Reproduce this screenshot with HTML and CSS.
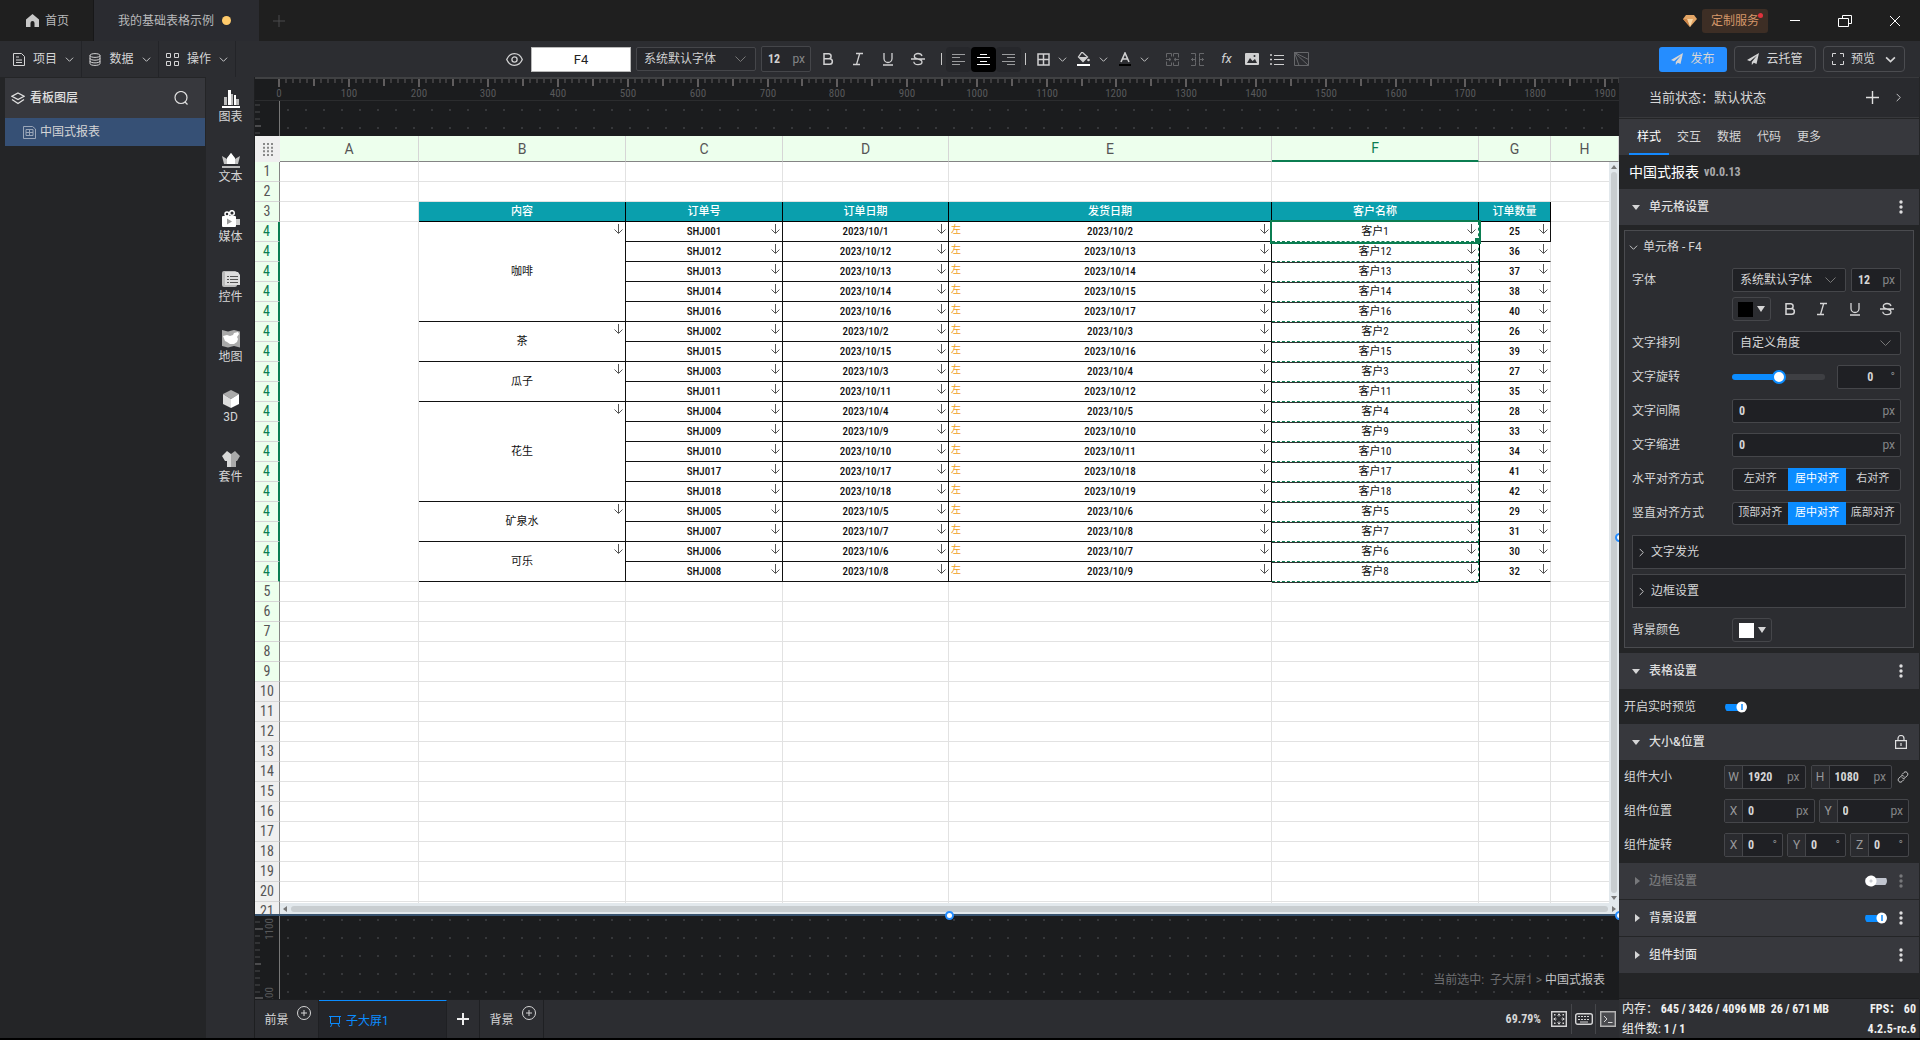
FILE: index.html
```html
<!DOCTYPE html>
<html lang="zh-CN">
<head>
<meta charset="utf-8">
<title>我的基础表格示例</title>
<link rel="stylesheet" href="styles.css">
<script src="app.js" defer></script>
</head>
<body>
<svg class="sprite" aria-hidden="true">
  <symbol id="chev" viewBox="0 0 10 10"><path d="M1 3l4 4 4-4" fill="none" stroke="currentColor"/></symbol>
  <symbol id="chev-r" viewBox="0 0 10 10"><path d="M3 1l4 4-4 4" fill="none" stroke="currentColor"/></symbol>
  <symbol id="bold" viewBox="0 0 14 14"><path d="M3 1.7h5a2.6 2.6 0 010 5.1H3zm0 5.1h5.600a2.700 2.700 0 010 5.500H3z" fill="none" stroke="currentColor" stroke-width="1.500"/></symbol>
  <symbol id="italic" viewBox="0 0 14 14"><path d="M5 1.500h7M2 12.500h7M8.700 1.500l-3.200 11" fill="none" stroke="currentColor" stroke-width="1.300"/></symbol>
  <symbol id="under" viewBox="0 0 14 14"><path d="M3 1v5.500a4 4 0 008 0V1M2 13h10" fill="none" stroke="currentColor" stroke-width="1.300"/></symbol>
  <symbol id="strike" viewBox="0 0 14 14"><path d="M11 4C10.500 2 9 1.500 7 1.500 5 1.500 3.300 2.500 3.300 4.200 3.300 6 5 6.600 7 7c2.500.5 4 1.200 4 3 0 1.700-1.700 2.600-4 2.600S3 11.600 2.800 9.700M0 7h14" fill="none" stroke="currentColor" stroke-width="1.300"/></symbol>
  <symbol id="plane" viewBox="0 0 12 12"><path d="M12 0L0 7l3 1.200L10 2.500 4.800 9v3l2-2.300L9.500 11z" fill="currentColor"/></symbol>
  <symbol id="dots" viewBox="0 0 4 14"><g fill="currentColor"><circle cx="2" cy="2" r="1.700"/><circle cx="2" cy="7" r="1.700"/><circle cx="2" cy="12" r="1.700"/></g></symbol>
  <symbol id="plus-o" viewBox="0 0 14 14"><path d="M7 4v6M4 7h6M13.500 7a6.500 6.500 0 11-13 0 6.500 6.500 0 0113 0z" fill="none" stroke="currentColor"/></symbol>
</svg>

<header class="titlebar">
  <nav class="wintabs">
    <a class="wintab home" href="#"><svg width="13" height="13" viewBox="0 0 13 13"><path d="M6.500 0L0 5.500V13h4.500V9a2 2 0 014 0v4H13V5.500z" fill="#c8c8c8"/></svg>首页</a>
    <a class="wintab current" href="#">我的基础表格示例<i class="unsaved"></i></a>
    <button class="newtab" aria-label="新建"><svg width="12" height="12" viewBox="0 0 12 12"><path d="M6 0v12M0 6h12" stroke="#4a4a4c"/></svg></button>
  </nav>
  <div class="winctl">
    <svg width="14" height="12" viewBox="0 0 14 12"><path d="M3 0h8l3 4-7 8-7-8z" fill="#e3a565"/><path d="M4 4h6l-3 8z" fill="#f8d6a4"/><path d="M0 4h4L7 12z" fill="#cd8547"/></svg>
    <a class="custom" href="#">定制服务<i></i></a>
    <button aria-label="最小化"><svg width="10" height="10" viewBox="0 0 10 10"><path d="M0 4.500h10" stroke="#fff"/></svg></button>
    <button aria-label="还原"><svg width="14" height="12" viewBox="0 0 14 12"><path d="M.5 3.500h10v8h-10zM4.500 3.500v-3h9v8h-3" fill="none" stroke="#fff"/></svg></button>
    <button aria-label="关闭"><svg width="12" height="12" viewBox="0 0 12 12"><path d="M1 1l10 10M11 1L1 11" stroke="#fff"/></svg></button>
  </div>
</header>

<div class="toolbar">
  <div class="menus">
    <button class="menu"><svg width="12" height="13" viewBox="0 0 12 13"><path d="M.5.5h8l3 3v9H.5zM3 4h3M3 7h6M3 9.500h6" fill="none" stroke="currentColor"/></svg>项目<svg class="c"><use href="#chev"/></svg></button>
    <button class="menu"><svg width="12" height="13" viewBox="0 0 12 13"><path d="M1 2.500C1 0 11 0 11 2.500v8c0 2.500-10 2.500-10 0zM1 2.500c0 2.500 10 2.500 10 0M1 5.300c0 2.500 10 2.500 10 0M1 8c0 2.500 10 2.500 10 0" fill="none" stroke="currentColor"/></svg>数据<svg class="c"><use href="#chev"/></svg></button>
    <button class="menu"><svg width="13" height="13" viewBox="0 0 13 13"><path d="M.5.5h4v4h-4zM8.500.5h4v4h-4zM.5 8.500h4v4h-4zM8.500 8.500h4v4h-4z" fill="none" stroke="currentColor"/></svg>操作<svg class="c"><use href="#chev"/></svg></button>
  </div>
  <div class="tools">
    <button class="eye" aria-label="显示"><svg width="17" height="13" viewBox="0 0 17 13"><path d="M.7 6.500C4-1.300 13-1.300 16.300 6.500 13 14.300 4 14.300.7 6.500z" fill="none" stroke="currentColor" stroke-width="1.300"/><circle cx="8.500" cy="6.500" r="2.600" fill="none" stroke="currentColor" stroke-width="1.300"/></svg></button>
    <input class="cellref" aria-label="单元格" value="F4">
    <select class="sel toolfont" aria-label="字体"><option>系统默认字体</option></select>
    <label class="field toolsize"><input value="12" aria-label="字号"><span>px</span></label>
    <button class="w30" aria-label="加粗"><svg class="s"><use href="#bold"/></svg></button>
    <button class="w30" aria-label="斜体"><svg class="s"><use href="#italic"/></svg></button>
    <button class="w30" aria-label="下划线"><svg class="s"><use href="#under"/></svg></button>
    <button class="w30" aria-label="删除线"><svg class="s"><use href="#strike"/></svg></button>
    <i class="vr"></i>
    <button class="al" aria-label="左对齐"><svg width="13" height="13" viewBox="0 0 13 13"><path d="M0 1.500h13M0 4.500h8M0 8.500h13M0 11.500h8" stroke="currentColor"/></svg></button>
    <button class="al on" aria-label="居中"><svg width="13" height="13" viewBox="0 0 13 13"><path d="M0 4.500h13M3 1.500h7M0 11.500h13M3 8.500h7" stroke="currentColor"/></svg></button>
    <button class="al" aria-label="右对齐"><svg width="13" height="13" viewBox="0 0 13 13"><path d="M0 1.500h13M5 4.500h8M0 8.500h13M5 11.500h8" stroke="currentColor"/></svg></button>
    <i class="vr tail"></i>
    <button class="w24" aria-label="边框"><svg width="13" height="13" viewBox="0 0 13 13"><path d="M1 1h11v11H1zM6.500 1v11M1 6.500h11" fill="none" stroke="currentColor" stroke-width="1.500"/></svg></button>
    <button class="cv" aria-label="边框选项"><svg class="c"><use href="#chev"/></svg></button>
    <button class="w24" aria-label="填充"><svg width="14" height="14" viewBox="0 0 14 14"><path d="M5 0l5.500 5L6 9.500 1.500 5z" fill="none" stroke="currentColor" stroke-width="1.300"/><path d="M2 5h8.500L6 9.500z" fill="currentColor"/><circle cx="11.500" cy="8" r="1.300" fill="currentColor"/><path d="M0 13h13" stroke="#fff" stroke-width="2"/></svg></button>
    <button class="cv" aria-label="填充选项"><svg class="c"><use href="#chev"/></svg></button>
    <button class="w24" aria-label="文字颜色"><svg width="12" height="14" viewBox="0 0 12 14"><path d="M2 10L6 1l4 9M3.500 7h5" fill="none" stroke="currentColor" stroke-width="1.600"/><path d="M0 13h12" stroke="#000" stroke-width="2"/></svg></button>
    <button class="cv" aria-label="颜色选项"><svg class="c"><use href="#chev"/></svg></button>
    <button class="w25 dim" aria-label="合并"><svg width="13" height="13" viewBox="0 0 13 13"><path d="M5.500.5h-5v4M.5 8.500v4h5M7.500.5h5v4M12.500 8.500v4h-5M5.500.5v3M5.500 9.500v3M7.500.5v3M7.500 9.500v3M0 6.500h4.500M13 6.500H8.500M3 5l2 1.500L3 8M10 5L8 6.500 10 8" fill="none" stroke="currentColor"/></svg></button>
    <button class="w25 dim" aria-label="拆分"><svg width="13" height="13" viewBox="0 0 13 13"><path d="M0 .5h4.500v3M0 12.500h4.500v-3M13 .5H8.500v3M13 12.500H8.500v-3M0 6.500h5M13 6.500H8M2 5L.5 6.500 2 8M11 5l1.500 1.500L11 8M4.500 3.500v6M8.500 3.500v6" fill="none" stroke="currentColor"/></svg></button>
    <button class="w25 fx">fx</button>
    <button class="w25" aria-label="图片"><svg width="14" height="12" viewBox="0 0 14 12"><rect width="14" height="12" rx="1" fill="currentColor"/><path d="M2 10l3-5 2.500 3L10 6l2 4z" fill="#2c2d31"/><circle cx="9.500" cy="3" r="1" fill="#2c2d31"/></svg></button>
    <button class="w25" aria-label="列表"><svg width="14" height="11" viewBox="0 0 14 11"><path d="M0 1h2M0 5.500h2M0 10h2" stroke="currentColor" stroke-width="1.500"/><path d="M4 1.500h10M4 5.500h10M4 10.500h10" stroke="currentColor"/></svg></button>
    <button class="w25 dim" aria-label="斜线表头"><svg width="15" height="14" viewBox="0 0 15 14"><path d="M.5.500h14v13H.5zM.5.500L5 13.500M.5.500l14 7M.5.500l14 13" fill="none" stroke="currentColor"/></svg></button>
  </div>
  <div class="actions">
    <button class="primary"><svg width="12" height="12"><use href="#plane"/></svg>发布</button>
    <button class="ghost"><svg width="12" height="12"><use href="#plane"/></svg>云托管</button>
    <button class="ghost"><svg width="12" height="12" viewBox="0 0 12 12"><path d="M4 .5H.5V4M8 .5h3.500V4M4 11.500H.5V8M8 11.500h3.500V8" fill="none" stroke="currentColor"/></svg>预览<svg class="big"><use href="#chev"/></svg></button>
  </div>
</div>

<main class="work">
  <aside class="layers">
    <h2><svg width="14" height="13" viewBox="0 0 14 13"><path d="M7 1l6 3.300-6 3.300-6-3.300zM1 7.500L7 11.500l6-4" fill="none" stroke="currentColor" stroke-width="1.300"/></svg>看板图层
      <button aria-label="搜索"><svg width="14" height="14" viewBox="0 0 14 14"><circle cx="7" cy="6.500" r="6" fill="none" stroke="currentColor" stroke-width="1.200"/><path d="M11 11l2.500 2.500" stroke="currentColor" stroke-width="1.200"/></svg></button></h2>
    <a class="layer" href="#"><svg width="13" height="13" viewBox="0 0 13 13"><path d="M.5.500h9l3 2.500v9.500H.5z" fill="none" stroke="currentColor"/><path d="M3 3.500h7v6H3zM3 6.500h7M6.500 3.500v6" fill="none" stroke="currentColor"/></svg>中国式报表</a>
  </aside>
  <nav class="palette">
    <a href="#"><svg viewBox="0 0 18 18"><path d="M0 17h18" stroke="#fff" stroke-width="2"/><path d="M6 0h3v15H6zM12 5h2v10h-2z" fill="#fff"/><path d="M2 7h3v8H2zM9 4h2v11H9zM14 9h3v6h-3z" fill="#bbb"/></svg>图表</a>
    <a href="#"><svg viewBox="0 0 18 18"><path d="M0 6l5 3 4-6 4 6 5-3-2 8H2z" fill="#c4c4c4"/><path d="M9 3l4 5v6H5V8z" fill="#fff"/><path d="M0 17h18" stroke="#bbb" stroke-width="2"/></svg>文本</a>
    <a href="#"><svg viewBox="0 0 18 18"><circle cx="5" cy="4" r="2" fill="none" stroke="#fff" stroke-width="1.500"/><circle cx="10" cy="3" r="2.300" fill="none" stroke="#fff" stroke-width="1.500"/><rect y="6" width="14" height="11" rx="1" fill="#fff"/><path d="M14 9h4v6h-4z" fill="#ccc"/><path d="M5 8.500l5 3-5 3z" fill="#999"/></svg>媒体</a>
    <a href="#"><svg viewBox="0 0 18 18"><rect x="0" y="1" width="15" height="16" rx="2" fill="#bbb"/><path d="M3 2h13l2 3v10H3z" fill="#ddd"/><path d="M5 6.500h2M8 6.500h8M5 9.500h2M8 9.500h8M5 12.500h2M8 12.500h8" stroke="#555"/></svg>控件</a>
    <a href="#"><svg viewBox="0 0 18 18"><path d="M0 0l6 1.500L12 0l6 1.500v16L12 16l-6 1.500L0 16z" fill="#a9a9a9"/><path d="M1 6l4-1 3 1 3-1 1-2 4-1 1 2-2 3 1 2-1 3-3 2-4 0-3-2-2-1z" fill="#fff"/></svg>地图</a>
    <a href="#"><svg viewBox="0 0 18 18"><path d="M9 0l8 4-8 5-8-5z" fill="#aaa"/><path d="M1 4l8 5v9l-8-4z" fill="#ddd"/><path d="M17 4L9 9v9l8-4z" fill="#fff"/></svg>3D</a>
    <a href="#"><svg viewBox="0 0 18 18"><path d="M5 1l4 3v13H5V11H3L0 6z" fill="#d8d8d8"/><path d="M13 1L9 4v13h5V11h1l3-5z" fill="#aaa"/></svg>套件</a>
  </nav>

  <section class="stage">
    <div class="canvas">
      <svg class="vruler" id="vruler" aria-hidden="true"></svg>
      <svg class="hruler" id="hruler" aria-hidden="true"></svg>
      <div class="sheet">
        <div class="clip">
          <table class="grid">
            <colgroup><col class="c0"><col class="ca"><col class="cb"><col class="cc"><col class="cd"><col class="ce"><col class="cb"><col class="cg"><col></colgroup>
            <thead><tr><th class="corner"><svg width="10" height="13" viewBox="0 0 10 13"><path d="M1 0v13M5 0v13M9 0v13" stroke="#888" stroke-width="2" stroke-dasharray="2 1.660"/></svg></th><th>A</th><th>B</th><th>C</th><th>D</th><th>E</th><th class="active">F</th><th>G</th><th>H</th></tr></thead>
            <tbody id="rows"></tbody>
          </table>
        </div>
        <div class="vscroll"><i class="up"></i><b></b><i class="down"></i></div>
        <div class="hscroll"><i class="left"></i><b></b><i class="right"></i></div>
        <i class="handle hs"></i><i class="handle he"></i><i class="handle hse"></i>
      </div>
      <p class="crumb">当前选中:&nbsp; 子大屏1 &gt; <b>中国式报表</b></p>
    </div>
    <footer class="screens">
      <button class="scr">前景<svg width="14" height="14"><use href="#plus-o"/></svg></button>
      <button class="scr now"><svg width="12" height="11" viewBox="0 0 12 11"><path d="M0 .5h12M1.500.500v7h9v-7M3 8l-1.500 3M9 8l1.500 3" fill="none" stroke="currentColor"/></svg>子大屏1</button>
      <button class="scr add" aria-label="添加"><svg width="12" height="12" viewBox="0 0 12 12"><path d="M6 0v12M0 6h12" stroke="#eee" stroke-width="2"/></svg></button>
      <button class="scr">背景<svg width="14" height="14"><use href="#plus-o"/></svg></button>
      <div class="zoom"><span>69.79%</span>
        <button aria-label="适应"><svg width="16" height="16" viewBox="0 0 16 16"><path d="M.7.700h14.600v14.600H.7z" fill="none" stroke="currentColor" stroke-width="1.400"/><path d="M8 2.500v3M8 10.500v3M2.500 8h3M10.500 8h3M6.500 4.500L8 3l1.500 1.500M6.500 11.500L8 13l1.500-1.500M4.500 6.500L3 8l1.500 1.500M11.500 6.500L13 8l-1.500 1.500" fill="none" stroke="currentColor"/><path d="M3 3h1.500v1.500H3zM11.500 3H13v1.500h-1.500zM3 11.500h1.500V13H3zM11.500 11.500H13V13h-1.500z" fill="currentColor"/></svg></button>
        <button aria-label="键盘"><svg width="18" height="12" viewBox="0 0 18 12"><rect x=".7" y=".7" width="16.600" height="10.600" rx="2" fill="none" stroke="currentColor" stroke-width="1.400"/><path d="M3 3.500h12M3 6.500h12" stroke="currentColor" stroke-dasharray="2 1"/><path d="M5 9h8" stroke="currentColor"/></svg></button>
        <button aria-label="终端"><svg width="16" height="16" viewBox="0 0 16 16"><path d="M.7.700h14.600v14.600H.7z" fill="#4a4b4f" stroke="#b4b4b4" stroke-width="1.400"/><path d="M4 5l3 3-3 3M8 11.500h4.500" fill="none" stroke="currentColor"/></svg></button>
      </div>
    </footer>
  </section>

  <aside class="props">
    <div class="state"><span>当前状态：默认状态</span><button aria-label="添加状态"><svg width="13" height="13" viewBox="0 0 13 13"><path d="M6.500 0v13M0 6.500h13" stroke="#e0e0e0" stroke-width="1.400"/></svg></button><svg class="c"><use href="#chev-r"/></svg></div>
    <nav class="ptabs"><a class="on" href="#">样式</a><a href="#">交互</a><a href="#">数据</a><a href="#">代码</a><a href="#">更多</a></nav>
    <h1>中国式报表<small>v0.0.13</small></h1>

    <h3 class="open"><i></i>单元格设置<svg class="d"><use href="#dots"/></svg></h3>
    <div class="card">
      <div class="cardhead"><svg class="c"><use href="#chev"/></svg>单元格 - F4</div>
      <div class="row"><label for="ff">字体</label><div class="ctl"><select id="ff" class="sel fam"><option>系统默认字体</option></select><label class="field size"><input value="12" aria-label="字号"><span>px</span></label></div></div>
      <div class="row short"><span></span><div class="ctl"><button class="color" aria-label="文字颜色"><i class="black"></i><u></u></button><button class="st" aria-label="加粗"><svg class="s"><use href="#bold"/></svg></button><button class="st" aria-label="斜体"><svg class="s"><use href="#italic"/></svg></button><button class="st" aria-label="下划线"><svg class="s"><use href="#under"/></svg></button><button class="st" aria-label="删除线"><svg class="s"><use href="#strike"/></svg></button></div></div>
      <div class="row"><label for="arr">文字排列</label><div class="ctl"><select id="arr" class="sel"><option>自定义角度</option></select></div></div>
      <div class="row"><label for="rot">文字旋转</label><div class="ctl gap"><input id="rot" type="range" min="-180" max="180" value="0"><label class="field deg"><input value="0" aria-label="角度"><span>°</span></label></div></div>
      <div class="row"><label for="sp">文字间隔</label><div class="ctl"><span class="field"><input id="sp" value="0"><span>px</span></span></div></div>
      <div class="row"><label for="ind">文字缩进</label><div class="ctl"><span class="field"><input id="ind" value="0"><span>px</span></span></div></div>
      <div class="row"><span>水平对齐方式</span><div class="ctl seg"><button>左对齐</button><button class="on">居中对齐</button><button>右对齐</button></div></div>
      <div class="row"><span>竖直对齐方式</span><div class="ctl seg"><button>顶部对齐</button><button class="on">居中对齐</button><button>底部对齐</button></div></div>
      <button class="fold"><svg class="c"><use href="#chev-r"/></svg>文字发光</button>
      <button class="fold"><svg class="c"><use href="#chev-r"/></svg>边框设置</button>
      <div class="row last"><span>背景颜色</span><div class="ctl"><button class="color" aria-label="背景颜色"><i class="white"></i><u></u></button></div></div>
    </div>

    <h3 class="open"><i></i>表格设置<svg class="d"><use href="#dots"/></svg></h3>
    <div class="row wide live"><label for="live">开启实时预览</label><input id="live" class="switch" type="checkbox" checked></div>
    <h3 class="open"><i></i>大小&amp;位置<svg class="lock" width="12" height="14" viewBox="0 0 12 14"><path d="M.6 5.600h10.800v7.800H.6zM3 5.500V3.500a3 3 0 016 0v2M6 8v3" fill="none" stroke="currentColor" stroke-width="1.200"/></svg></h3>
    <div class="row wide"><span>组件大小</span><div class="ctl"><label class="field"><em>W</em><input value="1920"><span>px</span></label><label class="field"><em>H</em><input value="1080"><span>px</span></label><svg width="12" height="12" viewBox="0 0 12 12"><path d="M5 3.500L7 1.500c2-2 5 1 3.300 3L8 6.800c-1 1-2.500.7-3-.3M7 8.500L5 10.500c-2 2-5-1-3.300-3L4 5.200c1-1 2.500-.7 3 .3" fill="none" stroke="currentColor"/></svg></div></div>
    <div class="row wide"><span>组件位置</span><div class="ctl four"><label class="field"><em>X</em><input value="0"><span>px</span></label><label class="field"><em>Y</em><input value="0"><span>px</span></label></div></div>
    <div class="row wide"><span>组件旋转</span><div class="ctl four"><label class="field"><em>X</em><input value="0"><span>°</span></label><label class="field"><em>Y</em><input value="0"><span>°</span></label><label class="field"><em>Z</em><input value="0"><span>°</span></label></div></div>
    <div class="stack">
      <h3 class="off"><i></i>边框设置<input class="switch" type="checkbox" aria-label="边框设置"><svg class="d"><use href="#dots"/></svg></h3>
      <h3><i></i>背景设置<input class="switch" type="checkbox" aria-label="背景设置" checked><svg class="d"><use href="#dots"/></svg></h3>
      <h3><i></i>组件封面<svg class="d"><use href="#dots"/></svg></h3>
    </div>
    <dl class="stats"><div><dt>内存：<b>&nbsp;645 / 3426 / 4096 MB&nbsp; 26 / 671 MB</b></dt><dd>FPS：&nbsp;60</dd></div><div><dt>组件数:<b> 1 / 1</b></dt><dd>4.2.5-rc.6</dd></div></dl>
  </aside>
</main>
</body>
</html>
```
FILE: styles.css
```css
* { box-sizing: border-box; }
:root { --num: "Liberation Sans Narrow", "Roboto Condensed", Roboto, "Noto Sans CJK SC", sans-serif; }
html { height: 100%; overflow: hidden; }
body { margin: 0; height: 100%; display: flex; flex-direction: column; overflow: hidden; background: #242527; border-bottom: 2px solid #000; color: #d5d5d6; font: 12px/18px Roboto, "Noto Sans CJK SC", sans-serif; }
button { font: inherit; color: inherit; background: none; border: 0; padding: 0; display: flex; align-items: center; justify-content: center; }
a { color: inherit; text-decoration: none; }
input, select { font: inherit; color: inherit; min-width: 0; margin: 0; }
svg { flex: none; display: block; }
p, h1, h2, h3, dl, dd { margin: 0; font-weight: 400; }
.sprite { position: absolute; width: 0; height: 0; }
.c { width: 9px; height: 9px; }
.s { width: 14px; height: 14px; }

.titlebar { height: 41px; flex: none; display: flex; justify-content: space-between; background: #1f1f1f; }
.wintabs { display: flex; }
.wintab { display: flex; align-items: center; color: #b9babb; }
.home { width: 94px; padding-left: 26px; gap: 6px; border-right: 1px solid #171718; }
.current { width: 165px; padding-left: 24px; gap: 8px; background: #2a2b30; }
.unsaved { width: 9px; height: 9px; border-radius: 50%; background: #ffcb6b; }
.newtab { width: 40px; }
.winctl { display: flex; align-items: center; }
.winctl button { width: 50px; height: 40px; }
.custom { position: relative; padding: 3px 9px; margin: 0 2px 0 5px; border-radius: 3px; background: #3d2e25; color: #d5976a; }
.custom i { position: absolute; right: 5px; top: 4px; width: 5px; height: 5px; border-radius: 50%; background: #e0323c; }

.toolbar { height: 36px; flex: none; display: flex; align-items: center; background: #2c2d31; }
.menus { display: flex; height: 36px; }
.menu { width: 77px; gap: 8px; border-right: 1px solid #232428; }
.menu:first-child { width: 82px; padding-left: 6px; }
.tools { display: flex; align-items: center; margin-left: 261px; color: #d0d0d1; }
.eye { width: 34px; height: 24px; }
.cellref { width: 100px; height: 25px; border: 1px solid #b9b9b9; background: #fff; color: #222; text-align: center; font-size: 13px; }
.sel { appearance: none; width: 100%; height: 24px; padding: 0 7px; border: 1px solid #45464a; border-radius: 2px; background: #202125 url("data:image/svg+xml,%3Csvg xmlns='http://www.w3.org/2000/svg' width='11' height='7'%3E%3Cpath d='M.5 .5l5 5 5-5' fill='none' stroke='%23777'/%3E%3C/svg%3E") no-repeat right 9px center; }
.toolfont { width: 120px; margin: 0 5px; background-color: #26272b; }
.field { display: flex; align-items: center; flex: 1; min-width: 0; height: 24px; padding-right: 5px; border: 1px solid #45464a; border-radius: 2px; background: #1f2024; }
.field input { flex: 1; width: 10px; height: 22px; padding: 0 0 0 6px; border: 0; background: none; font: bold 12px/22px var(--num); outline: 0; }
.field span { color: #858688; }
.field em { width: 18px; margin-right: -1px; align-self: stretch; border-right: 1px solid #45464a; background: #2a2b2f; color: #98999b; font-style: normal; line-height: 22px; text-align: center; }
.toolsize { flex: none; width: 50px; height: 26px; margin-right: 2px; background: #26272b; }
.w30 { width: 30px; height: 24px; }
.w24 { width: 24px; height: 24px; }
.w25 { width: 25px; height: 24px; }
.cv { width: 14px; height: 24px; margin-right: 3px; }
.cv + .w25 { margin-left: 6px; }
.vr { width: 1px; height: 12px; margin: 0 4px 0 8px; background: #c8c8c8; }
.vr.tail { margin: 0 5px 0 4px; }
.al { width: 25px; height: 25px; border-radius: 4px; background: #26272b; color: #9b9c9e; }
.al.on { background: #000; color: #fff; }
.dim { color: #66676a; }
.fx { margin-left: 4px; font-size: 13px; font-style: italic; }
.actions { display: flex; align-items: center; gap: 7px; margin-left: auto; margin-right: 15px; }
.primary { width: 68px; height: 25px; gap: 7px; border-radius: 3px; background: #258dff; }
.ghost { width: 82px; height: 26px; gap: 7px; border: 1px solid #4b4c50; border-radius: 4px; }
.big { width: 11px; height: 11px; margin-left: 3px; stroke-width: 1.5; }

.work { flex: 1; min-height: 0; display: flex; overflow: hidden; }
.layers { flex: none; width: 206px; padding: 1px 1px 0 5px; background: #242527; }
.layers h2 { height: 40px; display: flex; align-items: center; gap: 5px; padding: 0 17px 0 6px; background: #37383d; font-size: 12px; font-weight: 500; color: #e0e0e0; }
.layers h2 button { margin-left: auto; }
.layer { height: 28px; display: flex; align-items: center; gap: 4px; padding-left: 18px; background: #365075; }
.layer svg { color: #9aa6b8; }
.palette { flex: none; width: 49px; padding: 1px 0 0 1px; background: #2c2d31; border-right: 1px solid #1e1f21; }
.palette a { height: 60px; padding-top: 12px; display: flex; flex-direction: column; align-items: center; }
.palette svg { width: 18px; height: 18px; }

.stage { flex: 1; min-width: 0; display: flex; flex-direction: column; }
.canvas { position: relative; flex: 1; min-height: 0; display: flex; flex-direction: column; overflow: hidden; background: conic-gradient(at 2px 2px, transparent 75%, #36373a 0) 32px 14px / 18px 18px #1b1c1e; }
.vruler { position: absolute; left: 0; top: 0; width: 25px; height: 100%; background: #1b1c1e; border-right: 1px solid #777; }
.hruler { position: relative; width: 100%; height: 24px; background: #1b1c1e; border-top: 2px solid #404143; border-bottom: 1px solid #2b2c2e; }
.canvas text { fill: #58595b; font: 11px var(--num); text-anchor: middle; }
.canvas line { stroke: #605d5e; }
.vruler line { stroke: #4b4b4d; }
.sheet { position: relative; flex: 1; min-height: 0; margin-top: 35px; border-bottom: 2px solid #38536f; background: #fff; }
.clip { height: 100%; overflow: hidden; }
.grid { width: 100%; table-layout: fixed; border-spacing: 0; color: #111; }
.c0 { width: 25px; } .ca { width: 139px; } .cb { width: 207px; } .cc { width: 157px; } .cd { width: 166px; } .ce { width: 323px; } .cg { width: 72px; }
.grid th, .grid td { padding: 0; }
.grid thead th { height: 26px; border-right: 1px solid #d6d6d6; border-bottom: 1px solid #858585; background: #edffed; color: #555; font-size: 14px; font-weight: 400; line-height: 24px; }
.grid thead .active { color: #0b7d51; border-bottom: 2px solid #0b7d51; }
.grid .corner { background: #efefef; border-right: 0; border-bottom: 0; }
.corner svg { margin: 0 auto; }
.grid tbody th { height: 20px; border-bottom: 1px solid #d6d6d6; border-right: 1px solid #858585; background: #edffed; color: #555; font: 14px/19px var(--num); }
.grid tbody th.four { color: #0b7d51; border-right: 2px solid #0b7d51; }
.grid tbody th.plain { background: #efefef; }
.grid td { height: 20px; border-right: 1px solid #e2e2e2; border-bottom: 1px solid #e2e2e2; text-align: center; font: 500 11px/19px var(--num); position: relative; }
.grid td.name { font-weight: 400; }
.grid .cell { border-color: #111; }
.grid .head { background: #0a9fad; color: #fff; border-color: #000; }
.grid .qty { border-right-color: #e2e2e2; }
.grid .expand::after { content: ""; position: absolute; right: 2px; top: 2px; width: 9px; height: 10px; background: url("data:image/svg+xml,%3Csvg xmlns='http://www.w3.org/2000/svg' width='9' height='10'%3E%3Cpath d='M4.500 0v9M.5 5.500l4 4 4-4' fill='none' stroke='%23555'/%3E%3C/svg%3E"); }
.from { position: absolute; left: 2px; top: 0; color: #f0a020; font: 10px/14px "Noto Sans CJK SC", sans-serif; }
.grid .client { font-weight: 400; border-right: 1px dashed #0b7d51; border-bottom: 1px dashed #0b7d51; box-shadow: 1px 0 #000, 0 1px #333; }
.grid .picked { outline: 2px solid #0b7d51; z-index: 1; }
.grid .picked::before { content: ""; position: absolute; right: -3px; bottom: -3px; width: 6px; height: 6px; background: #0b7d51; }
.vscroll { position: absolute; right: 0; top: 26px; bottom: 11px; width: 10px; display: flex; flex-direction: column; align-items: center; justify-content: space-between; padding: 3px 0; background: #e2e8ec; }
.vscroll b { flex: 1; width: 6px; margin: 3px 0; border-radius: 3px; background: #c8cdd0; }
.hscroll { position: absolute; left: 25px; right: 0; bottom: 0; height: 11px; display: flex; align-items: center; padding: 0 3px; background: #e2e8ec; }
.hscroll b { flex: 1; height: 6px; margin: 0 4px; border-radius: 3px; background: #c8cdd0; }
.up, .down, .left, .right { border: 3px solid transparent; }
.up { border-top: 0; border-bottom: 4px solid #777; }
.down { border-bottom: 0; border-top: 4px solid #777; }
.left { border-left: 0; border-right: 4px solid #777; }
.right { border-right: 0; border-left: 4px solid #777; }
.handle { position: absolute; width: 9px; height: 9px; border: 2px solid #258dff; border-radius: 50%; background: #fff; }
.hs { left: 50%; bottom: -6px; margin-left: 8px; }
.he { right: -5px; top: 51%; }
.hse { right: -5px; bottom: -6px; }
.crumb { position: relative; height: 83px; padding: 55px 14px 0 0; text-align: right; color: #6e6f71; }
.crumb b { font-weight: 400; color: #c2c3c4; }
.screens { flex: none; height: 39px; display: flex; background: #2c2d31; border-top: 1px solid #1c1d1f; }
.scr { width: 64px; padding: 2px 0 0 2px; gap: 8px; border-right: 1px solid #1f2023; }
.scr svg { align-self: flex-start; margin-top: 4px; }
.now { width: 128px; padding: 3px 0 0 10px; justify-content: flex-start; gap: 5px; border-top: 1px solid #0b8cff; background: #242529; color: #0b8cff; }
.now svg, .add svg { align-self: center; margin: 0; }
.add { width: 33px; padding: 0; }
.zoom { margin-left: auto; display: flex; align-items: center; }
.zoom span { font: bold 12px/18px var(--num); margin-right: 6px; }
.zoom button { width: 24px; height: 30px; }
.zoom button + button { border-left: 1px solid #45464a; }

.props { flex: none; width: 300px; margin-right: 1px; display: flex; flex-direction: column; background: #242527; }
.state { height: 41px; flex: none; display: flex; align-items: center; gap: 15px; padding: 0 16px 0 30px; border-top: 1px solid #38393c; border-bottom: 1px solid #38393c; background: #292a2e; font-size: 13px; }
.state button { margin-left: auto; }
.ptabs { display: flex; flex: none; height: 36px; padding-left: 10px; margin-top: 1px; background: #37383d; }
.ptabs a { width: 40px; padding-top: 2px; line-height: 32px; text-align: center; border-bottom: 2px solid transparent; }
.ptabs .on { border-color: #1389ff; color: #fff; }
.props h1 { height: 34px; flex: none; display: flex; align-items: center; gap: 5px; padding-left: 10px; font-size: 14px; color: #fff; }
.props small { font: bold 12px/18px var(--num); color: #a9a9ab; }
.props h3 { height: 36px; flex: none; display: flex; align-items: center; padding: 0 16px; background: #37383d; font-size: 12px; font-weight: 500; color: #dededf; }
.props h3 i { width: 14px; display: flex; }
.props h3 i::before { content: ""; border: 4px solid transparent; border-left: 5px solid #d5d5d6; border-right: 0; }
.props h3.open i::before { border: 4px solid transparent; border-top: 5px solid #d5d5d6; border-bottom: 0; margin-left: -3px; }
.d { width: 4px; height: 14px; margin-left: auto; }
.lock { margin-left: auto; margin-right: -4px; }
.card { flex: none; margin: 5px; border: 1px solid #4a4b4f; background: #2c2d31; }
.cardhead { height: 32px; display: flex; align-items: center; gap: 5px; padding-left: 4px; }
.row { height: 34px; flex: none; display: grid; grid-template-columns: 100px minmax(0, 1fr); align-items: center; padding: 0 12px 0 7px; }
.row.short { height: 29px; align-items: start; }
.row.wide { padding: 0 10px 0 5px; }
.row.live { height: 35px; }
.ctl { display: flex; align-items: center; gap: 5px; height: 24px; }
.gap { gap: 12px; }
.four { gap: 4px; }
.field.size { flex: none; width: 50px; }
.field.deg { flex: none; width: 64px; }
.deg input { padding-left: 12px; text-align: center; }
.color { width: 40px; height: 24px; gap: 4px; border: 1px solid #45464a; border-radius: 3px; }
.color i { width: 15px; height: 15px; }
.black { background: #000; }
.white { background: #fff; }
.color u { border: 4px solid transparent; border-top: 6px solid #d5d5d6; border-bottom: 0; }
.st { width: 28px; height: 24px; }
input[type="range"] { appearance: none; flex: 1; width: 10px; height: 6px; border-radius: 3px; background: linear-gradient(90deg, #0b8cff 50%, #3e3f43 50%); }
input[type="range"]::-webkit-slider-thumb { appearance: none; width: 14px; height: 14px; border: 2px solid #0b8cff; border-radius: 50%; background: #fff; }
.seg { gap: 0; }
.seg button { flex: 1; height: 23px; background: #202125; border: 1px solid #45464a; border-right: 0; border-radius: 3px 0 0 3px; font-size: 11px; }
.seg .on { flex: none; width: 58px; background: #0b8cff; border-color: #0b8cff; border-radius: 0; color: #fff; }
.seg button:last-child { border: 1px solid #45464a; border-left: 0; border-radius: 0 3px 3px 0; }
.fold { height: 34px; margin: 5px 7px 0; padding-left: 4px; gap: 5px; border: 1px solid #45464a; background: #202125; justify-content: flex-start; min-width: 274px; }
.last { margin-top: 5px; }
.switch { appearance: none; width: 22px; height: 12px; background: radial-gradient(circle at 6px 6px, #c9ccd2 1px, #fff 2px 2px, #fff 5px, transparent 6px), linear-gradient(#c1c5cf, #c1c5cf) 0 3px / 22px 7px no-repeat; border-radius: 6px; }
.row .switch { margin-left: 1px; }
.switch:checked { background: linear-gradient(#4aa8ff, #4aa8ff) 16px 3px / 2px 6px no-repeat, radial-gradient(circle at 17px 6px, #fff 5px, transparent 6px), linear-gradient(#0b8cff, #0b8cff) 0 3px / 20px 7px no-repeat; }
h3 .switch { margin-left: auto; }
h3 .switch + .d { margin-left: 12px; }
.props .off, .off .d { color: #77787b; }
.props .off i::before { border-left-color: #77787b; }
.stack { display: flex; flex-direction: column; gap: 1px; margin-top: 1px; }
.stats { margin-top: auto; flex: none; height: 40px; padding: 0 3px; background: #2f3034; border-top: 1px solid #1c1d1f; color: #f0f0f0; }
.stats div { display: flex; justify-content: space-between; line-height: 20px; }
.stats b, .stats dd { font-weight: bold; font-family: var(--num); }
```
FILE: app.js
```js
// Spreadsheet contents: one entry per merged product group.
const groups = [
  ["咖啡", [["001", 1, 2, 1, 25], ["012", 12, 13, 12, 36], ["013", 13, 14, 13, 37], ["014", 14, 15, 14, 38], ["016", 16, 17, 16, 40]]],
  ["茶", [["002", 2, 3, 2, 26], ["015", 15, 16, 15, 39]]],
  ["瓜子", [["003", 3, 4, 3, 27], ["011", 11, 12, 11, 35]]],
  ["花生", [["004", 4, 5, 4, 28], ["009", 9, 10, 9, 33], ["010", 10, 11, 10, 34], ["017", 17, 18, 17, 41], ["018", 18, 19, 18, 42]]],
  ["矿泉水", [["005", 5, 6, 5, 29], ["007", 7, 8, 7, 31]]],
  ["可乐", [["006", 6, 7, 6, 30], ["008", 8, 9, 8, 32]]],
];
const blank = n => "<td></td>".repeat(n);
let html = `<tr><th>1</th>${blank(8)}</tr><tr><th>2</th>${blank(8)}</tr>`;
html += `<tr><th>3</th><td></td>${["内容", "订单号", "订单日期", "发货日期", "客户名称", "订单数量"].map(t => `<td class="head">${t}</td>`).join("")}<td></td></tr>`;
groups.forEach(([product, orders], g) => orders.forEach(([id, ordered, shipped, client, qty], i) => {
  const first = g === 0 && i === 0;
  html += `<tr><th class="four">4</th>`;
  if (first) html += `<td rowspan="18"></td>`;
  if (i === 0) html += `<td class="cell expand name" rowspan="${orders.length}">${product}</td>`;
  html += `<td class="cell expand">SHJ${id}</td><td class="cell expand">2023/10/${ordered}</td>`;
  html += `<td class="cell expand"><span class="from">左</span>2023/10/${shipped}</td>`;
  html += `<td class="cell expand client${first ? " picked" : ""}">客户${client}</td><td class="cell expand${first ? "" : " qty"}">${qty}</td>`;
  if (first) html += `<td rowspan="18"></td>`;
  html += `</tr>`;
}));
for (let r = 5; r <= 21; r++) html += `<tr><th${r > 9 ? ' class="plain"' : ""}>${r}</th>${blank(8)}</tr>`;
document.getElementById("rows").innerHTML = html;

// Rulers: ten-unit ticks at the current zoom.
const step = 6.979;
let h = "", v = "";
for (let k = 0; k <= 192; k++) {
  const x = Math.round(24 + k * step), major = k % 10 === 0, mid = k % 5 === 0;
  h += `<line x1="${x}" x2="${x}" y1="0" y2="${major ? 8 : mid ? 7 : 4}" stroke-width="${mid ? 2 : 1}"/>`;
  if (major) h += `<text x="${x}" y="18">${k * 10}</text>`;
}
for (let k = -10; k <= 120; k++) {
  const y = Math.round(84 + k * step), major = k % 10 === 0, mid = k % 5 === 0;
  v += `<line y1="${y}" y2="${y}" x1="0" x2="${major ? 8 : mid ? 6 : 5}" stroke-width="${mid ? 2 : 1}"/>`;
  if (major) v += `<text transform="translate(18 ${y}) rotate(-90)">${k * 10}</text>`;
}
document.getElementById("hruler").innerHTML = h;
document.getElementById("vruler").innerHTML = v;
```
